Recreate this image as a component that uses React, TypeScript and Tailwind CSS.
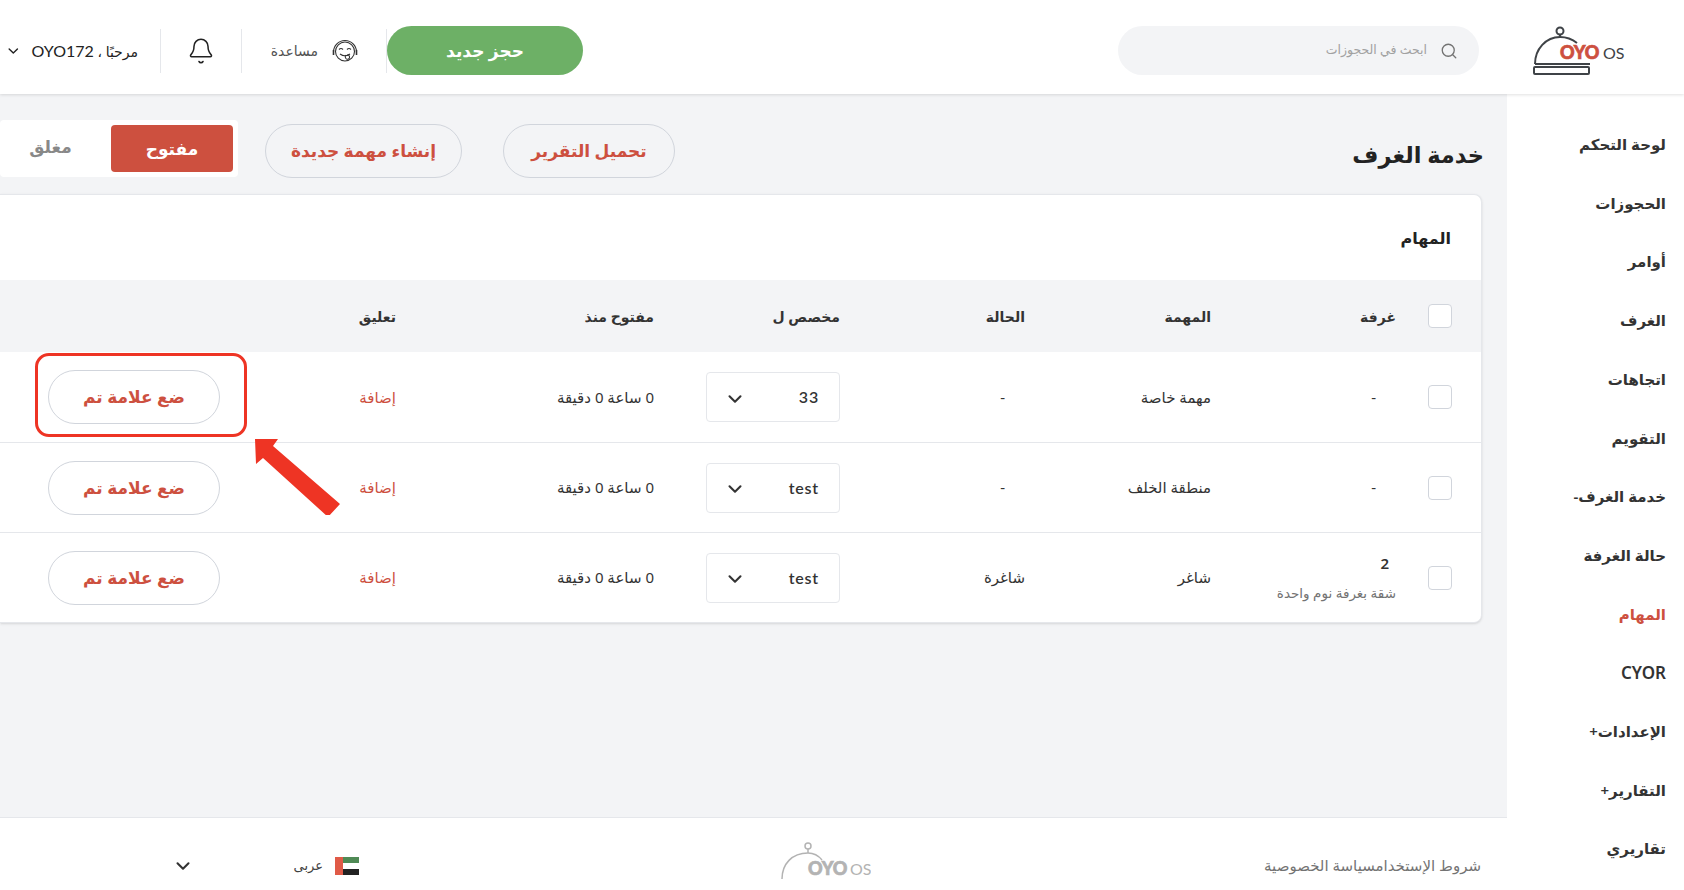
import React from "react";
import { Bell, ChevronDown, Search } from "lucide-react";

const navItems = [
  { label: "لوحة التحكم" },
  { label: "الحجوزات" },
  { label: "أوامر" },
  { label: "الغرف" },
  { label: "اتجاهات" },
  { label: "التقويم" },
  { label: "خدمة الغرف-" },
  { label: "حالة الغرفة" },
  { label: "المهام", active: true },
  { label: "CYOR", latin: true },
  { label: "الإعدادات+" },
  { label: "التقارير+" },
  { label: "تقاريري" },
];

const tasks = [
  { room: "-", task: "مهمة خاصة", status: "-", assigned: "33" },
  { room: "-", task: "منطقة الخلف", status: "-", assigned: "test" },
  { room: "2", sub: "شقة بغرفة نوم واحدة", task: "شاغر", status: "شاغرة", assigned: "test" },
];

const gridCols = "grid grid-cols-[85px_185px_186px_185px_186px_258px_177px_1fr]";

const Logo: React.FC = () => (
  <div dir="ltr">
    <svg width="92" height="50" viewBox="0 0 92 50" fill="none">
      <circle cx="27" cy="5" r="3.5" stroke="#3f4347" strokeWidth="2" />
      <path d="M27 9v3" stroke="#3f4347" strokeWidth="2" />
      <path d="M2 38c0-15 11-27 25-27 7 0 12 2 17 6" stroke="#3f4347" strokeWidth="2" />
      <path d="M2 38h55" stroke="#3f4347" strokeWidth="2" />
      <rect x="1" y="41" width="55" height="7" rx="1" stroke="#3f4347" strokeWidth="2" />
      <text x="27" y="33" fontFamily="Lato, sans-serif" fontWeight="900" fontSize="18" fill="#cd503f" stroke="#cd503f" strokeWidth="0.7">
        OYO
      </text>
      <text x="70" y="33" fontFamily="Lato, sans-serif" fontSize="16" fill="#3f4347">
        OS
      </text>
    </svg>
  </div>
);

const FooterLogo: React.FC = () => (
  <div dir="ltr">
    <svg width="90" height="38" viewBox="0 0 90 38" fill="none">
      <circle cx="27" cy="4" r="3" stroke="#b3b3b3" strokeWidth="1.5" />
      <path d="M27 7v4" stroke="#b3b3b3" strokeWidth="1.5" />
      <path d="M1 37c0-15 10-26 26-26 6 0 10 2 14 7" stroke="#b3b3b3" strokeWidth="1.5" />
      <text x="27" y="33" fontFamily="Lato, sans-serif" fontWeight="900" fontSize="18" fill="#b3b3b3" stroke="#b3b3b3" strokeWidth="0.7">
        OYO
      </text>
      <text x="69" y="33" fontFamily="Lato, sans-serif" fontSize="16" fill="#b3b3b3">
        OS
      </text>
    </svg>
  </div>
);

const HelpIcon: React.FC = () => (
  <svg width="28" height="28" viewBox="0 0 28 28" fill="none" stroke="#333" strokeWidth="1.1">
    <circle cx="14" cy="14.5" r="9.5" />
    <path d="M2.5 15a11.5 11.5 0 0 1 23 0" />
    <path d="M2.5 13v5M25.5 13v5" strokeWidth="1.6" />
    <path d="M8 12.5q2-2 4 0M16 12.5q2-2 4 0M9 17q5 3.5 10 0" />
    <path d="M14.5 18c-1 3 1 5 3 4s1-4-1-4.500" />
  </svg>
);

const Checkbox: React.FC = () => (
  <div className="w-6 h-6 rounded bg-white border border-gray-300" />
);

const App: React.FC = () => {
  return (
    <div dir="rtl" className="w-[1684px] h-[890px] relative overflow-hidden flex flex-col bg-white text-[#333] font-['Noto_Sans','DejaVu_Sans',sans-serif]">
      <header className="h-[94px] shrink-0 flex items-center justify-between pt-[7px] bg-white shadow-[0_1px_3px_rgba(0,0,0,0.12)] relative z-10">
        <div className="flex items-center">
          <div className="mr-[59px] ml-[54px]">
            <Logo />
          </div>
          <div className="w-[361px] h-[49px] rounded-full bg-gray-100 flex items-center pr-[21px] gap-[13px]">
            <Search size={18} strokeWidth={1.75} className="text-neutral-500" />
            <span className="text-[12.5px] text-neutral-400">ابحث في الحجوزات</span>
          </div>
        </div>
        <div className="flex items-center">
          <button className="w-[196px] h-[49px] rounded-full bg-[#6db066] text-white text-[17px] font-semibold">
            حجز جديد
          </button>
          <div className="w-[145px] h-[44px] border-r border-gray-200 flex items-center pr-[27px] gap-[13px]">
            <HelpIcon />
            <span className="text-[14px] text-neutral-600">مساعدة</span>
          </div>
          <div className="w-[81px] h-[44px] border-r border-gray-200 flex items-center justify-center">
            <Bell size={28} strokeWidth={1.3} className="text-[#222]" />
          </div>
          <div className="w-[161px] h-[44px] border-r border-gray-200 flex items-center pr-[22px] gap-[10px] pl-[5px]">
            <span dir="rtl" className="text-[14px] whitespace-nowrap text-[#222]">
              مرحبًا ، <span className="font-['Lato',sans-serif] text-[16px]">OYO172</span>
            </span>
            <ChevronDown size={20} className="text-[#222]" />
          </div>
        </div>
      </header>

      <div className="flex flex-1 min-h-0">
        <nav className="w-[177px] shrink-0 bg-white flex flex-col pt-[21px] pr-[18px]">
          {navItems.map((item) => (
            <a
              key={item.label}
              className={`h-[58.7px] shrink-0 flex items-center font-semibold ${
                item.latin ? "text-[17px]" : "text-[15px]"
              } ${item.active ? "text-[#cd503f]" : "text-[#333]"}`}
            >
              {item.label}
            </a>
          ))}
        </nav>

        <main className="flex-1 min-w-0 flex flex-col bg-gray-100">
          <div className="flex-1 pr-[25px] overflow-hidden">
            <div className="h-[100px] flex items-start">
              <h1 className="w-[807px] shrink-0 pt-[44px] -mr-[2px] text-[22.5px] font-bold text-[#222]">خدمة الغرف</h1>
              <button className="w-[172px] h-[54px] mt-[30px] mr-[2px] rounded-full border border-gray-300 text-[#cd503f] text-[17px] font-semibold">
                تحميل التقرير
              </button>
              <button className="w-[197px] h-[54px] mt-[30px] mr-[41px] rounded-full border border-gray-300 text-[#cd503f] text-[17px] font-semibold">
                إنشاء مهمة جديدة
              </button>
              <div className="w-[238px] h-[57px] mt-[26px] mr-[27px] bg-white rounded flex items-center pr-[5px]">
                <button className="w-[122px] h-[47px] rounded-sm bg-[#cd503f] text-white text-[17px] font-semibold">
                  مفتوح
                </button>
                <span className="flex-1 text-center pr-[10px] pb-[3px] text-[17px] font-semibold text-[#888]">مغلق</span>
              </div>
            </div>

            <section className="w-[1482px] bg-white border border-l-0 border-gray-200 rounded-r-lg shadow-sm">
              <div className="h-[85px] flex items-center pr-[30px] text-[16px] font-semibold text-[#222]">المهام</div>
              <div className={`${gridCols} h-[72px] items-center bg-gray-100 text-[14px] font-semibold text-[#333]`}>
                <div className="pr-[29px]">
                  <Checkbox />
                </div>
                <div>غرفة</div>
                <div>المهمة</div>
                <div>الحالة</div>
                <div>مخصص ل</div>
                <div>مفتوح منذ</div>
                <div>تعليق</div>
                <div />
              </div>
              {tasks.map((t, i) => (
                <div
                  key={i}
                  className={`${gridCols} h-[90px] items-center text-[15px] ${i > 0 ? "border-t border-gray-200" : ""}`}
                >
                  <div className="pr-[29px]">
                    <Checkbox />
                  </div>
                  <div>
                    {t.sub ? (
                      <>
                        <div className="pr-[7px] text-[15px] font-semibold leading-5">{t.room}</div>
                        <div className="text-[13.5px] text-neutral-500 mt-[10px] leading-5">{t.sub}</div>
                      </>
                    ) : (
                      <span className="pr-5">{t.room}</span>
                    )}
                  </div>
                  <div>{t.task}</div>
                  <div className={t.status === "-" ? "pr-5" : ""}>{t.status}</div>
                  <div>
                    <div className="w-[134px] h-[50px] rounded border border-gray-200 flex items-center justify-between pr-[20px] pl-[17px]">
                      <span className="font-['Lato',sans-serif] text-[16px] font-semibold tracking-wider">{t.assigned}</span>
                      <ChevronDown size={22} strokeWidth={2.25} className="text-[#333] mt-[3px]" />
                    </div>
                  </div>
                  <div>0 ساعة 0 دقيقة</div>
                  <div className="text-[#cd503f]">إضافة</div>
                  <div className="-mr-[1px]">
                    <button className="w-[172px] h-[54px] rounded-full border border-gray-300 text-[#cd503f] text-[17px] font-semibold">
                      ضع علامة تم
                    </button>
                  </div>
                </div>
              ))}
            </section>
          </div>

          <footer className="h-[73px] shrink-0 bg-white border-t border-gray-200 flex items-center pt-[23px] pr-[26px]">
            <span className="w-[610px] shrink-0 text-[15px] text-neutral-500">شروط الإستخدامسياسة الخصوصية</span>
            <div className="w-[90px] h-[38px] shrink-0 mt-[-10px]">
              <FooterLogo />
            </div>
            <div className="mr-[422px] flex items-center gap-[12px]">
              <span className="w-[24px] h-[18px] flex flex-row-reverse">
                <span className="w-[8px] h-full bg-[#e05a47]" />
                <span className="flex-1 flex flex-col">
                  <span className="flex-1 bg-[#4f8a55]" />
                  <span className="flex-1 bg-white" />
                  <span className="flex-1 bg-[#222]" />
                </span>
              </span>
              <span className="text-[13px] text-neutral-700">عربى</span>
            </div>
            <ChevronDown size={22} strokeWidth={2.25} className="mr-[100px] text-[#333]" />
          </footer>
        </main>
      </div>

      {/* annotation over the first row */}
      <div className="absolute left-[35px] top-[353px] w-[212px] h-[84px] rounded-[14px] border-[3px] border-[#ee3424]" />
      <svg className="absolute left-[250px] top-[435px]" width="90" height="80" viewBox="250 435 90 80">
        <polygon fill="#ee3424" points="255,439 278,439 273,446 340,504 328,517 263,458 256,464" />
      </svg>
    </div>
  );
};

export default App;
